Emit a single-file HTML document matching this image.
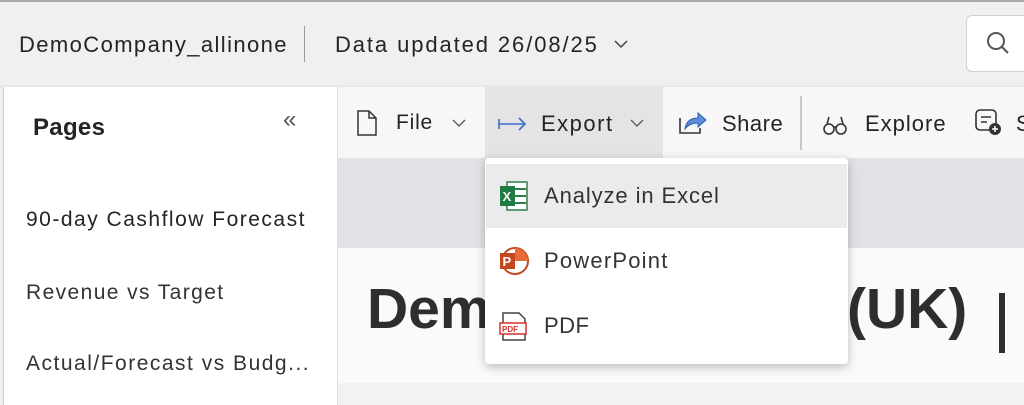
<!DOCTYPE html>
<html><head><style>
*{margin:0;padding:0;box-sizing:border-box}
body{width:1024px;height:405px;overflow:hidden;background:#f0f0f0;font-family:"Liberation Sans",sans-serif;color:#252423;position:relative}
.a{position:absolute;white-space:nowrap}
</style></head><body>
<div class="a" style="left:0;top:0;width:1024px;height:2px;background:#a8a8a8"></div>
<div class="a" style="left:19px;top:32px;font-size:22px;letter-spacing:1.4px">DemoCompany_allinone</div>
<div class="a" style="left:304px;top:26px;width:1px;height:36px;background:#9a9a9a"></div>
<div class="a" style="left:335px;top:32px;font-size:22px;letter-spacing:1.9px">Data updated 26/08/25</div>
<svg class="a" style="left:613px;top:38px" width="16" height="12"><path d="M2 3 L8 9 L14 3" stroke="#444" stroke-width="1.5" fill="none"/></svg>
<div class="a" style="left:966px;top:15px;width:70px;height:57px;background:#fff;border:1px solid #d0d0d0;border-radius:6px"></div>
<svg class="a" style="left:985px;top:30px" width="30" height="30"><circle cx="11" cy="11" r="8" stroke="#555" stroke-width="2" fill="none"/><path d="M17 17 L23 23" stroke="#555" stroke-width="2"/></svg>
<div class="a" style="left:0;top:85px;width:1024px;height:3px;background:#e8e8e8"></div>
<div class="a" style="left:3px;top:87px;width:335px;height:318px;background:#fff;border-left:1px solid #ccc;border-right:1px solid #e0e0e0"></div>
<div class="a" style="left:33px;top:114px;font-size:24px;font-weight:bold;letter-spacing:0.3px">Pages</div>
<div class="a" style="left:283px;top:106px;font-size:24px;color:#555">«</div>
<div class="a" style="left:26px;top:208px;font-size:21px;letter-spacing:1.5px">90-day Cashflow Forecast</div>
<div class="a" style="left:26px;top:281px;font-size:21px;letter-spacing:1.4px;color:#333">Revenue vs Target</div>
<div class="a" style="left:26px;top:352px;font-size:21px;letter-spacing:1.5px;color:#333">Actual/Forecast vs Budg...</div>
<div class="a" style="left:338px;top:87px;width:686px;height:71px;background:#f7f7f7"></div>
<div class="a" style="left:485px;top:87px;width:178px;height:71px;background:#e4e4e4"></div>
<svg class="a" style="left:356px;top:109px" width="22" height="28"><path d="M2 2 H13 L20 9 V26 H2 Z M13 2 V9 H20" stroke="#333" stroke-width="1.5" fill="none"/></svg>
<div class="a" style="left:396px;top:111px;font-size:21px;letter-spacing:0.8px">File</div>
<svg class="a" style="left:452px;top:118px" width="14" height="10"><path d="M1 2 L7 8 L13 2" stroke="#555" stroke-width="1.3" fill="none"/></svg>
<svg class="a" style="left:497px;top:114px" width="32" height="20"><path d="M2 5 V15 M2 10 H28 M22 4 L28 10 L22 16" stroke="#3a6fc9" stroke-width="1.6" fill="none"/></svg>
<div class="a" style="left:541px;top:111px;font-size:22px;letter-spacing:1.5px">Export</div>
<svg class="a" style="left:630px;top:118px" width="14" height="10"><path d="M1 2 L7 8 L13 2" stroke="#555" stroke-width="1.3" fill="none"/></svg>
<svg class="a" style="left:678px;top:108px" width="30" height="28"><path d="M2 10 V25 H22 V20" stroke="#333" stroke-width="1.6" fill="none"/><path d="M7 21 C8 13 13 10 20 10 V5 L28 12 L20 19 V15 C14 15 10 17 7 21 Z" fill="#5b8dd9" stroke="#2f5fa8" stroke-width="1"/></svg>
<div class="a" style="left:722px;top:111px;font-size:22px;letter-spacing:0.5px">Share</div>
<div class="a" style="left:800px;top:96px;width:2px;height:54px;background:#c8c8c8"></div>
<svg class="a" style="left:822px;top:113px" width="26" height="24"><circle cx="7" cy="16" r="5" stroke="#333" stroke-width="1.6" fill="none"/><circle cx="19" cy="16" r="5" stroke="#333" stroke-width="1.6" fill="none"/><path d="M5 11 L7 4 M21 11 L19 4 M11 14 H15" stroke="#333" stroke-width="1.6"/></svg>
<div class="a" style="left:865px;top:111px;font-size:22px;letter-spacing:1px">Explore</div>
<svg class="a" style="left:974px;top:107px" width="30" height="30"><rect x="2" y="3" width="20" height="20" rx="4" stroke="#333" stroke-width="1.6" fill="none"/><path d="M7 10 H17 M7 15 H13" stroke="#333" stroke-width="1.5"/><circle cx="21" cy="22" r="6" fill="#333"/><path d="M21 19 V25 M18 22 H24" stroke="#fff" stroke-width="1.5"/></svg>
<div class="a" style="left:1016px;top:111px;font-size:22px">S</div>
<div class="a" style="left:338px;top:158px;width:686px;height:90px;background:#e1e1e7"></div>
<div class="a" style="left:338px;top:248px;width:686px;height:157px;background:#fafafa"></div>
<div class="a" style="left:338px;top:383px;width:686px;height:22px;background:#f2f2f2"></div>
<div class="a" style="left:367px;top:276px;font-size:57px;font-weight:bold;color:#2e2e2e">Dem</div>
<div class="a" style="left:847px;top:276px;font-size:57px;font-weight:bold;color:#2e2e2e">(UK)</div>
<div class="a" style="left:999px;top:293px;width:6px;height:60px;background:#2e2e2e"></div>
<div class="a" style="left:485px;top:158px;width:363px;height:206px;background:#fff;border-radius:4px;box-shadow:0 3px 10px rgba(0,0,0,.25)"></div>
<div class="a" style="left:486px;top:164px;width:361px;height:64px;background:#ebebeb"></div>
<svg class="a" style="left:499px;top:181px" width="30" height="30"><rect x="8" y="1" width="20" height="28" fill="#fff" stroke="#2e7d46" stroke-width="1.5"/><path d="M15 8 H27 M15 15 H27 M15 22 H27" stroke="#2e7d46" stroke-width="2"/><rect x="1" y="5" width="15" height="20" fill="#1f7a43"/><text x="3.5" y="20" font-family="Liberation Sans" font-size="13" font-weight="bold" fill="#fff">X</text></svg>
<div class="a" style="left:544px;top:183px;font-size:22px;letter-spacing:0.9px;color:#333">Analyze in Excel</div>
<svg class="a" style="left:499px;top:246px" width="30" height="30"><circle cx="16" cy="15" r="13" fill="#fff" stroke="#c4461f" stroke-width="2"/><path d="M16 2 A13 13 0 0 1 29 15 H16 Z" fill="#e86b3c"/><rect x="1" y="7" width="15" height="16" fill="#c4461f"/><text x="3.5" y="20" font-family="Liberation Sans" font-size="13" font-weight="bold" fill="#fff">P</text></svg>
<div class="a" style="left:544px;top:248px;font-size:22px;letter-spacing:1.2px;color:#333">PowerPoint</div>
<svg class="a" style="left:499px;top:311px" width="30" height="32"><path d="M4 2 H20 L26 8 V29 H4 Z" fill="#fff" stroke="#444" stroke-width="1.5"/><rect x="1" y="12" width="26" height="11" fill="#fff" stroke="#d9302c" stroke-width="1.5"/><text x="3" y="21" font-family="Liberation Sans" font-size="8" font-weight="bold" fill="#d9302c">PDF</text></svg>
<div class="a" style="left:544px;top:313px;font-size:22px;letter-spacing:0.5px;color:#333">PDF</div>
</body></html>
